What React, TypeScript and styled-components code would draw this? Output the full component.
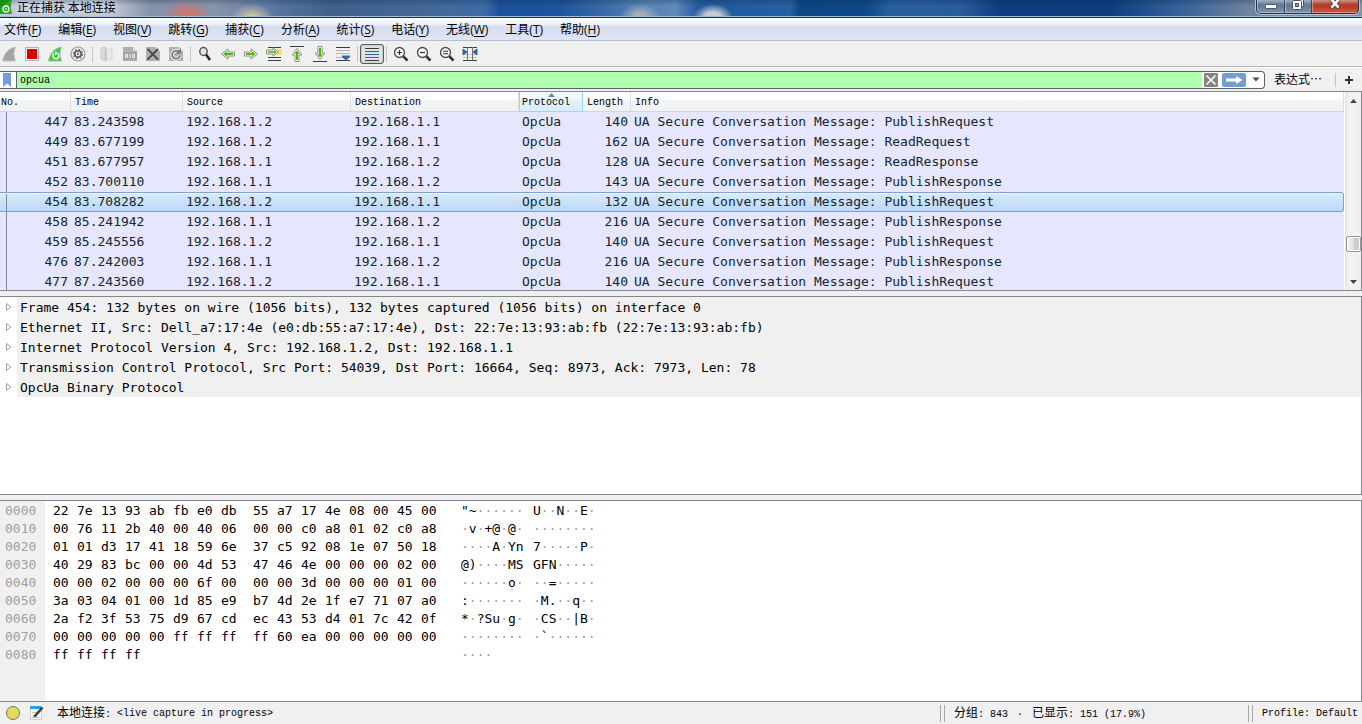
import React from 'react';
import styled, { createGlobalStyle, css } from 'styled-components';

const UI = '"Open Sans", "Noto Sans CJK SC", sans-serif';
const BITMAP = '"Liberation Mono", "Noto Sans CJK SC", monospace';
const MONO = '"DejaVu Sans Mono", monospace';

const Global = createGlobalStyle`
  *, *::before, *::after { box-sizing: border-box; }
  body { margin: 0; background: #f0f0f0; color: #000; }
  button, input { font: inherit; color: inherit; border: 0; padding: 0; margin: 0; background: none; }
`;

const Window = styled.div`
  display: flex;
  flex-direction: column;
  min-height: 100vh;
  background: #f0f0f0;
  font: 12px/16px ${UI};
`;

/* ---------- title bar ---------- */

const TitleBar = styled.header`
  display: flex;
  align-items: flex-start;
  height: 18px;
  border-bottom: 1px solid #1f2f45;
  box-shadow: inset 0 -1px 0 #a9bdd2;
  background:
    radial-gradient(ellipse 24px 14px at 187px 14px, #c8786c 20%, transparent),
    radial-gradient(ellipse 22px 14px at 252px 18px, #c9c0ab 20%, transparent),
    radial-gradient(ellipse 20px 12px at 640px 16px, #aaafbd 20%, transparent),
    radial-gradient(ellipse 20px 14px at 713px 18px, #c9ccd6 40%, transparent),
    linear-gradient(rgba(10, 30, 60, 0.25), transparent 6px),
    linear-gradient(90deg, #c3ccda 0, #b4bdcb 120px, #8391a9 150px, #8794ad 215px, #55749d 280px, #41608a 330px, #426a9b 450px, #3b6ba8 485px,
      #1b519a 500px, #1d549c 560px, #3569a6 600px, #5481b4 640px, #5f8abb 675px, #20599c 700px, #2562a2 790px, #0d4585 800px, #0d4787 865px,
      #275f9f 890px, #2a5c9e 960px, #0b3d80 1000px, #0c3e80 1110px, #35629a 1180px, #71839d 1250px, #8493a6 100%);
`;

const Title = styled.h1`
  flex: 1;
  margin: 0 0 0 5px;
  font: 12px/14px "Noto Sans CJK SC", sans-serif;
  color: #000;
  text-shadow: 0 0 6px #e6ecf4, 0 0 6px #e6ecf4;
`;

const Caption = styled.div`
  display: flex;
  height: 14px;
  margin-right: 3px;
  border: 1px solid #25324a;
  border-top: 0;
  border-radius: 0 0 5px 5px;
  box-shadow: 0 0 0 1px #b6c3d2;
  overflow: hidden;
`;

const CaptionButton = styled.button<{ $close?: boolean }>`
  display: flex;
  justify-content: center;
  align-items: flex-start;
  width: ${p => (p.$close ? 47 : 27)}px;
  border-left: 1px solid #3a4961;
  background: ${p => (p.$close
    ? 'linear-gradient(#c8978b, #b8351f 5px, #cf5a3c)'
    : 'linear-gradient(#9fb0c4, #5f7793 5px, #7f96b0)')};
  box-shadow: inset 1px -1px 0 rgba(255, 255, 255, 0.35);
  &:first-child { border-left: 0; }
`;

/* ---------- menu ---------- */

const MenuBar = styled.nav`
  display: flex;
  gap: 17px;
  height: 23px;
  padding: 0 4px;
  border-bottom: 1px solid #b6bccc;
  background: linear-gradient(#fdfeff 0, #e9eef7 7px, #d5dcee 8px, #dfe4f5 100%);
`;

const MenuItem = styled.button`
  padding-top: 2px;
  font: 12px/20px ${UI};
  white-space: nowrap;
  u { text-underline-offset: 2px; }
`;

/* ---------- toolbar ---------- */

const ToolBar = styled.div`
  display: flex;
  align-items: center;
  gap: 7px;
  height: 26px;
  padding-left: 1px;
  border-bottom: 1px solid #b6b6b6;
  background: #f0f0f0;
`;

const ToolButton = styled.button<{ $on?: boolean }>`
  position: relative;
  width: 16px;
  height: 16px;
  svg { display: block; position: relative; }
  ${p => p.$on && css`
    &::before {
      content: '';
      position: absolute;
      inset: -2px -4px;
      border: 1px solid #55585c;
      border-radius: 3px;
      background: #e2e3e6;
      box-shadow: inset 0 0 2px #8d9094;
    }
  `}
`;

const Separator = styled.span`
  width: 1px;
  height: 16px;
  margin: 0 -1px;
  background: #c4c4c4;
`;

/* ---------- filter ---------- */

const FilterBar = styled.form`
  display: flex;
  align-items: center;
  height: 24px;
  border-top: 1px solid #fff;
`;

const FilterBox = styled.div`
  display: flex;
  flex: 1;
  align-items: center;
  height: 18px;
  border: 1px solid #5e6164;
  border-left: 0;
  border-radius: 0 4px 4px 0;
  background: #fff;
`;

const Bookmark = styled.button`
  display: flex;
  align-items: center;
  width: 17px;
  height: 16px;
  padding-left: 3px;
  border-right: 1px solid #5e6164;
`;

const FilterInput = styled.input`
  flex: 1;
  min-width: 0;
  height: 16px;
  padding: 2px 3px 0;
  outline: 0;
  background: #afffaf;
  font: 10px/14px ${BITMAP};
`;

const ClearButton = styled.button`
  margin: 0 2px;
  height: 14px;
  svg { display: block; }
`;

const ApplyButton = styled(ClearButton)``;

const HistoryButton = styled.button`
  display: flex;
  align-items: center;
  justify-content: center;
  width: 16px;
  height: 14px;
`;

const Expression = styled.button`
  margin-left: 9px;
  font: 12px/16px ${UI};
`;

const FilterSeparator = styled.span`
  width: 1px;
  height: 14px;
  margin: 0 9px 0 13px;
  background: #c4c4c4;
`;

const AddButton = styled.button`
  width: 8px;
  margin-right: 9px;
  svg { display: block; }
`;

/* ---------- panes ---------- */

const Panes = styled.main`
  display: flex;
  flex: 1;
  flex-direction: column;
  gap: 5px;
`;

const Pane = styled.section<{ $basis: number }>`
  display: flex;
  flex: 1 1 ${p => p.$basis}px;
  min-height: 0;
  overflow: hidden;
  border: solid #828790;
  border-width: 1px 1px 1px 0;
  background: #fff;
`;

const TableArea = styled.div`
  flex: 1;
  min-width: 0;
  margin-right: 1px;
  overflow: hidden;
`;

const PacketTable = styled.table`
  width: 100%;
  border-collapse: separate;
  border-spacing: 0;
  table-layout: fixed;
`;

const HeadCell = styled.th<{ $sorted?: boolean; $flush?: boolean }>`
  position: relative;
  height: 20px;
  padding: 2px 0 0 ${p => (p.$flush ? 1 : 4)}px;
  border-right: 1px solid #dedfe1;
  border-bottom: 1px solid #d5d5d5;
  background: linear-gradient(#fff 0, #fff 7px, #f3f4f6 8px, #f1f2f4 100%);
  font: 10px/16px ${BITMAP};
  text-align: left;
  white-space: nowrap;
  ${p => p.$sorted && css`
    padding-left: 3px;
    border-color: #96d9f9;
    box-shadow: inset 1px 0 0 #96d9f9;
    background: linear-gradient(#f4fafd 0, #f0f8fc 7px, #e2f1f9 8px, #d9edf7 100%);
  `}
`;

const SortMark = styled.svg`
  position: absolute;
  top: 1px;
  left: 29px;
`;

const PacketRow = styled.tr<{ $selected?: boolean }>`
  background: #e7e6ff;
  td {
    height: 20px;
    padding: 0 3px;
    color: #12272e;
    font: 13px/20px ${MONO};
    white-space: pre;
    vertical-align: top;
  }
  td:first-child {
    background: linear-gradient(#7e8794, #7e8794) 6px 0 / 1px 100% no-repeat;
  }
  ${p => p.$selected && css`
    background: linear-gradient(#dcebfc, #b9d7fb);
    td {
      line-height: 18px;
      border: solid #7da2ce;
      border-width: 1px 0;
      box-shadow: inset 0 1px 0 #ebf4fd;
    }
    td:last-child { border-right-width: 1px; border-radius: 0 3px 3px 0; }
  `}
`;

const NumCell = styled.td`
  text-align: right;
`;

const ScrollBar = styled.div`
  display: flex;
  flex-direction: column;
  justify-content: space-between;
  width: 16px;
  border-left: 1px solid #e3e3e3;
  background: linear-gradient(90deg, #e9e9e9, #f3f3f3 4px, #f0f0f0);
`;

const ScrollArrow = styled.button`
  height: 17px;
  svg { display: block; margin: auto; }
`;

const ScrollTrack = styled.div`
  display: flex;
  flex: 1;
  align-items: flex-end;
  padding-bottom: 21px;
`;

const ScrollThumb = styled.div`
  width: 15px;
  height: 16px;
  border: 1px solid #979797;
  border-radius: 2px;
  background: linear-gradient(90deg, #f5f5f5, #e3e3e4 6px, #cfcfd1 7px, #c8c8cb);
  box-shadow: inset 0 0 0 1px #fafafa;
`;

const Tree = styled.ul`
  flex: 1;
  margin: 0;
  padding: 0;
  list-style: none;
`;

const TreeItem = styled.li`
  display: flex;
  align-items: flex-start;
  height: 20px;
  padding: 2px 0 0 5px;
  background: linear-gradient(90deg, #fff 17px, #f0f0f0 17px);
  font: 13px/18px ${MONO};
  white-space: pre;
  svg { flex: none; margin: 3px 7px 0 0; }
`;

const HexArea = styled.div`
  flex: 1;
  padding: 1px 0 0 5px;
  background: linear-gradient(90deg, #f0f0f0 45px, #fff 45px);
`;

const HexTable = styled.table`
  width: 620px;
  border-collapse: collapse;
  table-layout: fixed;
  td {
    height: 18px;
    padding: 0;
    font: 13px/18px ${MONO};
    white-space: pre;
  }
`;

const Offset = styled.td`
  color: #a0a0a0;
`;

const Dot = styled.span`
  color: #a09aa8;
`;

/* ---------- status bar ---------- */

const StatusBar = styled.footer`
  display: flex;
  align-items: center;
  height: 22px;
  padding: 2px 4px 0 6px;
  font: 10px/20px ${BITMAP};
  white-space: pre;
`;

const StatusIcon = styled.button`
  width: 16px;
  height: 16px;
  margin: 0 7px 2px 0;
  svg { display: block; }
`;

const Han = styled.span`
  font-size: 12px;
`;

const InterfaceText = styled.span`
  width: 60px;
  margin-left: 5px;
`;

const CaptureText = styled.span`
  flex: 1;
`;

const Grip = styled.span`
  width: 5px;
  height: 17px;
  margin: 0 9px 2px 0;
  border: solid #a8a8a8;
  border-width: 0 1px;
`;

const PacketsText = styled.span`
  width: 294px;
`;

const Bullet = styled.span`
  display: inline-block;
  width: 12px;
  text-align: center;
`;

/* ---------- data ---------- */

const menus: [string, string][] = [
  ['文件', 'F'], ['编辑', 'E'], ['视图', 'V'], ['跳转', 'G'], ['捕获', 'C'], ['分析', 'A'],
  ['统计', 'S'], ['电话', 'Y'], ['无线', 'W'], ['工具', 'T'], ['帮助', 'H'],
];

type Packet = [number, string, string, string, number, string];
const A = '192.168.1.1';
const B = '192.168.1.2';
const packets: Packet[] = [
  [447, '83.243598', B, A, 140, 'PublishRequest'],
  [449, '83.677199', B, A, 162, 'ReadRequest'],
  [451, '83.677957', A, B, 128, 'ReadResponse'],
  [452, '83.700110', A, B, 143, 'PublishResponse'],
  [454, '83.708282', B, A, 132, 'PublishRequest'],
  [458, '85.241942', A, B, 216, 'PublishResponse'],
  [459, '85.245556', B, A, 140, 'PublishRequest'],
  [476, '87.242003', A, B, 216, 'PublishResponse'],
  [477, '87.243560', B, A, 140, 'PublishRequest'],
];

const details = [
  'Frame 454: 132 bytes on wire (1056 bits), 132 bytes captured (1056 bits) on interface 0',
  'Ethernet II, Src: Dell_a7:17:4e (e0:db:55:a7:17:4e), Dst: 22:7e:13:93:ab:fb (22:7e:13:93:ab:fb)',
  'Internet Protocol Version 4, Src: 192.168.1.2, Dst: 192.168.1.1',
  'Transmission Control Protocol, Src Port: 54039, Dst Port: 16664, Seq: 8973, Ack: 7973, Len: 78',
  'OpcUa Binary Protocol',
];

const dump: [string, string, string][] = [
  ['0000', '22 7e 13 93 ab fb e0 db 55 a7 17 4e 08 00 45 00', '"~······U··N··E·'],
  ['0010', '00 76 11 2b 40 00 40 06 00 00 c0 a8 01 02 c0 a8', '·v·+@·@·········'],
  ['0020', '01 01 d3 17 41 18 59 6e 37 c5 92 08 1e 07 50 18', '····A·Yn7·····P·'],
  ['0030', '40 29 83 bc 00 00 4d 53 47 46 4e 00 00 00 02 00', '@)····MSGFN·····'],
  ['0040', '00 00 02 00 00 00 6f 00 00 00 3d 00 00 00 01 00', '······o···=·····'],
  ['0050', '3a 03 04 01 00 1d 85 e9 b7 4d 2e 1f e7 71 07 a0', ':········M.··q··'],
  ['0060', '2a f2 3f 53 75 d9 67 cd ec 43 53 d4 01 7c 42 0f', '*·?Su·g··CS··|B·'],
  ['0070', '00 00 00 00 00 ff ff ff ff 60 ea 00 00 00 00 00', '·········`······'],
  ['0080', 'ff ff ff ff', '····'],
];

const byteSlots = Array.from({ length: 16 }, (_, i) => i);
const byteWidth = (i: number) => (i === 7 ? 32 : i === 15 ? 40 : 24);

/* ---------- icons ---------- */

const Svg = ({ children }: { children: React.ReactNode }) => (
  <svg width="16" height="16" viewBox="0 0 16 16" fill="none" aria-hidden="true">{children}</svg>
);

const Fin = ({ fill, edge }: { fill: string; edge: string }) => (
  <path d="M1.5 15C3 8 7 2 14.5 1.2C12.5 5 12.5 10 14.5 15Z" fill={fill} stroke={edge} />
);

const Doc = ({ children }: { children: React.ReactNode }) => (
  <Svg>
    <path d="M1 1H11L15 5V15H1Z" fill="#b0b0b0" />
    <path d="M11 1L15 5H11Z" fill="#dedede" />
    {children}
  </Svg>
);

const Arrow = ({ turn = 0 }: { turn?: number }) => (
  <g transform={`rotate(${turn} 8 8)`}>
    <path d="M1.5 6H8V3L14.500 8L8 13V10H1.5Z" fill="#fff" stroke="#8a8f88" />
    <path d="M3 7H9V5.200L12.700 8L9 10.800V9H3Z" fill="#4eb80e" />
  </g>
);

const Lens = ({ children }: { children?: React.ReactNode }) => (
  <Svg>
    <circle cx="6.500" cy="6.500" r="5" fill="#f8f8f8" stroke="#474b4e" strokeWidth="1.300" />
    <path d="M10.300 10.300L14.500 14.500" stroke="#2e3436" strokeWidth="2.600" />
    {children}
  </Svg>
);

const tools: ([string, React.ReactNode, boolean?] | null)[] = [
  ['开始捕获', <Svg><Fin fill="#a3a3a3" edge="#c4c4c4" /></Svg>],
  ['停止捕获', <Svg><rect x="1.500" y="1.500" width="13" height="13" fill="#f4f4f4" stroke="#b5b5b5" /><rect x="3" y="3" width="10" height="10" fill="#dc0000" /></Svg>],
  ['重新开始捕获', <Svg>
    <Fin fill="#2fd02f" edge="#a8b8a8" />
    <path d="M7.200 7.300A3 3 0 1 0 11 7.600" stroke="#fff" strokeWidth="1.500" />
    <path d="M8 5V9.500L11 7Z" fill="#fff" />
  </Svg>],
  ['捕获选项', <Svg>
    <circle cx="8" cy="8" r="7" fill="#f2f2f2" stroke="#999" strokeWidth="1.200" />
    <circle cx="8" cy="8" r="3.200" stroke="#666" strokeWidth="1.800" />
    <circle cx="8" cy="8" r="4.600" stroke="#666" strokeWidth="1.200" strokeDasharray="1.800 1.810" />
    <circle cx="8" cy="8" r="1.200" fill="#777" />
  </Svg>],
  null,
  ['打开', <Svg>
    <path d="M2 2L6 1V15L2 13Z" fill="#dcdcdc" stroke="#c8c8c8" />
    <path d="M6 3H13V13H6Z" fill="#e8e8e8" stroke="#d2d2d2" />
    <path d="M6 1L8 4V14L6 15Z" fill="#c8c8c8" />
  </Svg>],
  ['保存', <Doc>
    <path d="M1 6.500H15V13.500H1Z" fill="#a0a0a0" />
    <path d="M3.500 8.500H5.500V11.500H3.500ZM8 8V12M10.500 8.500H12.500V11.500H10.500Z" stroke="#f4f4f4" />
  </Doc>],
  ['关闭', <Doc><path d="M2.500 3L13 13.500M13 3L2.500 13.500" stroke="#4c4c4c" strokeWidth="2" /></Doc>],
  ['重新加载', <Doc>
    <path d="M10.500 5.500A4 4 0 1 0 12 9.500" stroke="#fff" strokeWidth="3.600" />
    <path d="M10.500 5.500A4 4 0 1 0 12 9.500" stroke="#777" strokeWidth="1.800" />
    <path d="M7.500 7.500H13V2Z" fill="#777" />
  </Doc>],
  null,
  ['查找', <Svg>
    <ellipse cx="6.500" cy="5.500" rx="3.700" ry="4" fill="#e4e8ea" stroke="#53585a" strokeWidth="1.500" />
    <path d="M9 8.500L13 14" stroke="#222" strokeWidth="2.500" />
  </Svg>],
  ['后退', <Svg><Arrow turn={180} /></Svg>],
  ['前进', <Svg><Arrow /></Svg>],
  ['转到分组', <Svg>
    <path d="M2 1.500H15M2 11.500H15M2 14.500H15" stroke="#3a3d3f" />
    <rect x="11" y="3" width="5" height="6" fill="#fbe45c" />
    <path d="M0.500 4H7V1.800L12.500 6L7 10.200V8H0.500Z" fill="#fff" stroke="#8a8f88" />
    <path d="M2 5.300H8V4L10.800 6L8 8V6.700H2Z" fill="#4eb80e" />
  </Svg>],
  ['首个分组', <Svg><g transform="translate(0 1)"><Arrow turn={-90} /></g><path d="M1 .500H15" stroke="#3a3d3f" /></Svg>],
  ['最新分组', <Svg><g transform="translate(0 -1)"><Arrow turn={90} /></g><path d="M1 15.500H15" stroke="#3a3d3f" /></Svg>],
  ['自动滚动', <Svg>
    <path d="M1 1.500H15M1 14.500H15" stroke="#3a3d3f" />
    <path d="M1 4.500H15M1 7.500H15M1 11.500H7" stroke="#b4b6b0" />
    <path d="M7 9.500H15V11L11 14.500L7 11Z" fill="#3465a4" />
  </Svg>],
  null,
  ['着色', <Svg>
    <path d="M1 2.500H15" stroke="#3a3d3f" /><path d="M1 5.500H15" stroke="#d92121" />
    <path d="M1 8.500H15" stroke="#3465a4" /><path d="M1 11.500H15" stroke="#75507b" />
    <path d="M1 14.500H15" stroke="#3a3d3f" />
  </Svg>, true],
  null,
  ['放大', <Lens><path d="M4 6.500H9M6.500 4V9" stroke="#2e3436" strokeWidth="1.200" /></Lens>],
  ['缩小', <Lens><path d="M4 6.500H9" stroke="#2e3436" strokeWidth="1.200" /></Lens>],
  ['普通大小', <Lens><path d="M4 5.300H9M4 7.700H9" stroke="#2e3436" strokeWidth="1.100" /></Lens>],
  ['调整列宽', <Svg>
    <path d="M1 1.500H15M1 14.500H15" stroke="#3a3d3f" />
    <path d="M1 8.500H15M1 11.500H15" stroke="#c4c6c0" />
    <path d="M5.500 1V15M10.500 1V15" stroke="#6d706c" />
    <path d="M1 3V9L5 6ZM15 3V9L11 6Z" fill="#3465a4" stroke="#3465a4" />
  </Svg>],
];

const columns: [string, number | undefined][] = [
  ['No.', 71], ['Time', 112], ['Source', 168], ['Destination', 168], ['Protocol', 64], ['Length', 48], ['Info', undefined],
];

const Ascii = ({ text }: { text: string }) => (
  <>{text.split(/(·+)/).map((part, i) => (part.startsWith('·') ? <Dot key={i}>{part}</Dot> : part))}</>
);

export default function App() {
  return (
    <Window>
      <Global />
      <TitleBar>
        <svg width="12" height="14" viewBox="0 0 12 14" aria-hidden="true">
          <path d="M0 0H12C10.500 4 10.500 9 12 14H0Z" fill="#27a327" />
          <path d="M0 0H10L0 8Z" fill="#159015" />
          <circle cx="6" cy="9" r="3" fill="none" stroke="#e2f2e0" strokeWidth="1.500" />
          <circle cx="6" cy="9" r="1" fill="#e2f2e0" />
        </svg>
        <Title>正在捕获 本地连接</Title>
        <Caption>
          <CaptionButton aria-label="最小化">
            <svg width="14" height="12"><rect x="1.500" y="4.500" width="11" height="4" rx="1" fill="#fff" stroke="#4a5568" /></svg>
          </CaptionButton>
          <CaptionButton aria-label="还原">
            <svg width="14" height="12">
              <path d="M4 0V-1H12.500V6.500H10" fill="#fff" stroke="#4a5568" />
              <rect x="1.500" y="0.500" width="9" height="9" rx="1" fill="#fff" stroke="#4a5568" />
              <rect x="4.500" y="3.500" width="3" height="3" fill="#8798ae" stroke="#4a5568" />
            </svg>
          </CaptionButton>
          <CaptionButton aria-label="关闭窗口" $close>
            <svg width="14" height="12">
              <path d="M3-1L11 8M11-1L3 8" stroke="#5a4a52" strokeWidth="4.500" />
              <path d="M3-1L10.500 7.500M11-1L3.500 7.500" stroke="#fff" strokeWidth="2.600" />
            </svg>
          </CaptionButton>
        </Caption>
      </TitleBar>
      <MenuBar>
        {menus.map(([label, key]) => (
          <MenuItem key={key}>{label}(<u>{key}</u>)</MenuItem>
        ))}
      </MenuBar>
      <ToolBar role="toolbar">
        {tools.map((tool, i) => (tool
          ? <ToolButton key={i} type="button" aria-label={tool[0]} $on={tool[2]}>{tool[1]}</ToolButton>
          : <Separator key={i} />))}
      </ToolBar>
      <FilterBar onSubmit={e => e.preventDefault()}>
        <FilterBox>
          <Bookmark type="button" aria-label="书签">
            <svg width="8" height="14"><path d="M0 0H8V14L4 10.500L0 14Z" fill="#6f9fd6" /></svg>
          </Bookmark>
          <FilterInput aria-label="显示过滤器" defaultValue="opcua" />
          <ClearButton type="button" aria-label="清除">
            <svg width="14" height="14">
              <rect width="14" height="14" rx="1" fill="#84867f" />
              <path d="M2.500 2.500L11.500 11.500M11.500 2.500L2.500 11.500" stroke="#fff" strokeWidth="1.500" />
            </svg>
          </ClearButton>
          <ApplyButton type="submit" aria-label="应用">
            <svg width="24" height="14">
              <rect width="24" height="14" rx="2" fill="#729fcf" />
              <path d="M4 5.500H14V3L20.500 7L14 11V8.500H4Z" fill="#fff" />
            </svg>
          </ApplyButton>
          <HistoryButton type="button" aria-label="历史">
            <svg width="8" height="5"><path d="M0.500 0.500H7.500L4 4.500Z" fill="#4a4a4a" /></svg>
          </HistoryButton>
        </FilterBox>
        <Expression type="button">表达式⋯</Expression>
        <FilterSeparator />
        <AddButton type="button" aria-label="添加">
          <svg width="8" height="8"><path d="M4 0V8M0 4H8" stroke="#333" strokeWidth="2" /></svg>
        </AddButton>
      </FilterBar>
      <Panes>
        <Pane $basis={200}>
          <TableArea>
            <PacketTable>
              <colgroup>{columns.map(([name, width]) => <col key={name} width={width} />)}</colgroup>
              <thead>
                <tr>
                  {columns.map(([name], i) => (
                    <HeadCell key={name} $sorted={name === 'Protocol'} $flush={i === 0}>
                      {name === 'Protocol' && (
                        <SortMark width="7" height="4"><path d="M0 4L3.500 0L7 4Z" fill="#5f8ba5" /></SortMark>
                      )}
                      {name}
                    </HeadCell>
                  ))}
                </tr>
              </thead>
              <tbody>
                {packets.map(([no, time, src, dst, len, info]) => (
                  <PacketRow key={no} $selected={no === 454}>
                    <NumCell>{no}</NumCell>
                    <td>{time}</td>
                    <td>{src}</td>
                    <td>{dst}</td>
                    <td>OpcUa</td>
                    <NumCell>{len}</NumCell>
                    <td>{'UA Secure Conversation Message: ' + info}</td>
                  </PacketRow>
                ))}
              </tbody>
            </PacketTable>
          </TableArea>
          <ScrollBar>
            <ScrollArrow aria-label="向上滚动">
              <svg width="7" height="4"><path d="M0 4L3.500 0L7 4Z" fill="#444" /></svg>
            </ScrollArrow>
            <ScrollTrack><ScrollThumb /></ScrollTrack>
            <ScrollArrow aria-label="向下滚动">
              <svg width="7" height="4"><path d="M0 0H7L3.500 4Z" fill="#444" /></svg>
            </ScrollArrow>
          </ScrollBar>
        </Pane>
        <Pane $basis={199}>
          <Tree>
            {details.map(line => (
              <TreeItem key={line}>
                <svg width="8" height="10" aria-hidden="true"><path d="M1.500 1.500L6 5L1.500 8.500Z" fill="#fff" stroke="#a0a0a0" /></svg>
                {line}
              </TreeItem>
            ))}
          </Tree>
        </Pane>
        <Pane $basis={202}>
          <HexArea>
            <HexTable>
              <colgroup>
                <col width="48" />
                {byteSlots.map(i => <col key={i} width={byteWidth(i)} />)}
                <col width="72" />
                <col />
              </colgroup>
              <tbody>
                {dump.map(([offset, bytes, text]) => {
                  const values = bytes.split(' ');
                  return (
                    <tr key={offset}>
                      <Offset>{offset}</Offset>
                      {byteSlots.map(i => <td key={i}>{values[i]}</td>)}
                      <td><Ascii text={text.slice(0, 8)} /></td>
                      <td><Ascii text={text.slice(8)} /></td>
                    </tr>
                  );
                })}
              </tbody>
            </HexTable>
          </HexArea>
        </Pane>
      </Panes>
      <StatusBar>
        <StatusIcon aria-label="专家信息">
          <svg width="16" height="16"><circle cx="7" cy="8" r="6.500" fill="#dedb60" stroke="#77773c" /></svg>
        </StatusIcon>
        <StatusIcon aria-label="捕获注释">
          <svg width="16" height="16" fill="none">
            <rect x="1.500" y="1.500" width="11" height="13" fill="#fafafa" stroke="#ccc" />
            <path d="M1 1H12V4H1Z" fill="#2f9fd0" />
            <path d="M3 7.500H8M3 10.500H7M3 12.500H10" stroke="#c4c4c4" />
            <path d="M6 11L13.500 2.500" stroke="#3a3f42" strokeWidth="2.600" />
            <path d="M4.500 12.500L5.500 9.500L7.500 11.500Z" fill="#3a3f42" />
          </svg>
        </StatusIcon>
        <InterfaceText><Han>本地连接</Han>:</InterfaceText>
        <CaptureText>&lt;live capture in progress&gt;</CaptureText>
        <Grip />
        <PacketsText><Han>分组</Han>: 843 <Bullet>·</Bullet> <Han>已显示</Han>: 151 (17.9%)</PacketsText>
        <Grip />
        <span>Profile: Default</span>
      </StatusBar>
    </Window>
  );
}
